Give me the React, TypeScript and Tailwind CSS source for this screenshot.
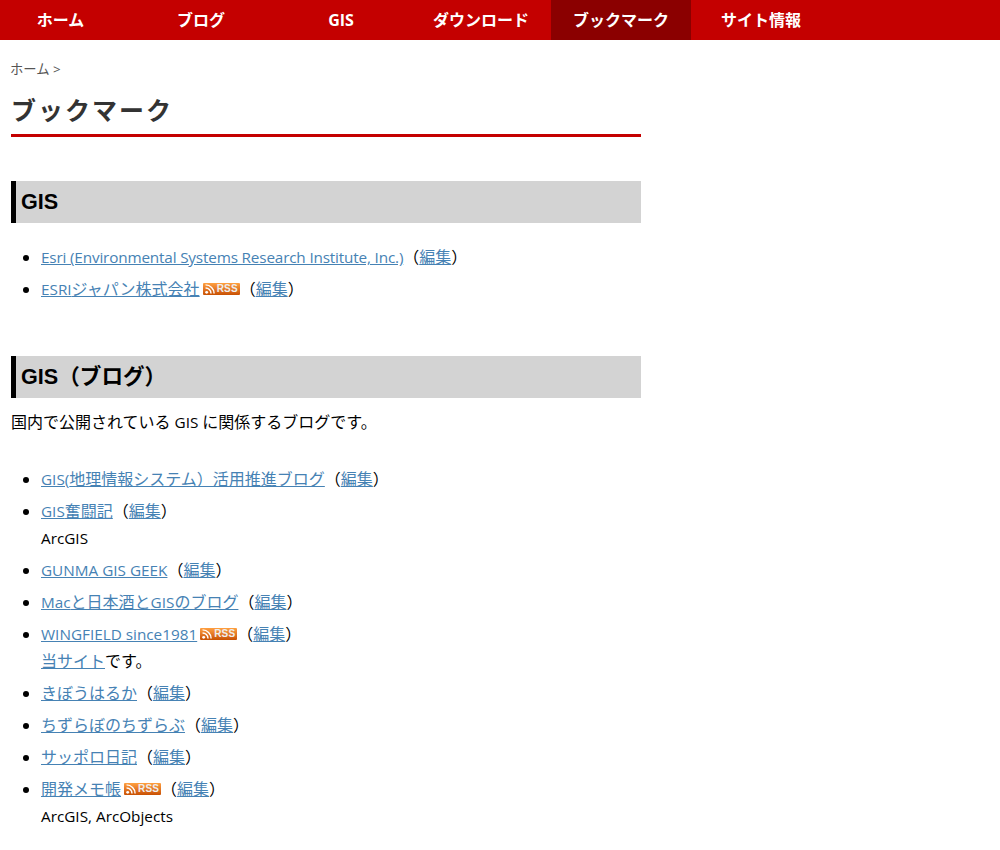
import React from "react";

const bodyFont = { fontFamily: '"Open Sans", "Noto Sans CJK JP", sans-serif' };

const navItems = [
  { label: "ホーム", className: "w-[131px] pr-[10px]" },
  { label: "ブログ", className: "w-[140px]" },
  { label: "GIS", className: "w-[140px]" },
  { label: "ダウンロード", className: "w-[140px]" },
  { label: "ブックマーク", className: "w-[140px] bg-[#8b0000]" },
  { label: "サイト情報", className: "w-[140px]" },
];

// latin runs are a touch smaller than the japanese next to them
const Mixed = ({ text }: { text: string }) => (
  <>
    {text.split(/([\x20-\x7e]+)/).map((part, i) =>
      i % 2 ? (
        <span key={i} className="text-[15.3px]">
          {part}
        </span>
      ) : (
        part
      ),
    )}
  </>
);

const RssBadge = () => (
  <span className="relative top-[-2px] ml-[3px] inline-flex h-[12px] w-[37px] items-center gap-[2px] rounded-[1px] bg-gradient-to-b from-[#ffa040] to-[#c85000] px-[2px] align-middle">
    <svg width="10" height="10" viewBox="0 0 9 9" className="shrink-0">
      <circle cx="1.5" cy="7.5" r="1.3" fill="#fff" />
      <path d="M0.5 3.6a4.9 4.9 0 0 1 4.9 4.9" fill="none" stroke="#fff" strokeWidth="1.3" />
      <path d="M0.5 0.8a7.7 7.7 0 0 1 7.7 7.7" fill="none" stroke="#fff" strokeWidth="1.3" />
    </svg>
    <span className="text-[10px] leading-none font-bold tracking-[0.2px] text-[#eee]" style={{ fontFamily: '"Liberation Sans", sans-serif' }}>
      RSS
    </span>
  </span>
);

const Link = ({ children }: { children: React.ReactNode }) => (
  <a href="#" className="text-[#4682b4] underline">
    {children}
  </a>
);

const Bookmark = ({ title, rss, note, tight }: { title: string; rss?: boolean; note?: React.ReactNode; tight?: boolean }) => (
  <li className="mb-[4px] leading-[28px]">
    <span className={tight ? "tracking-[-0.17px]" : ""}>
      <Link>
        <Mixed text={title} />
      </Link>
    </span>
    {rss && <RssBadge />}
    <span>
      （<Link>編集</Link>）
    </span>
    {note && <div className="pb-[1px] leading-[26px]">{note}</div>}
  </li>
);

const SectionTitle = ({ children }: { children: React.ReactNode }) => (
  <h2
    className="h-[42px] border-l-[5px] border-black bg-[#d3d3d3] pl-[5px] text-[21.6px] leading-[41px] font-bold text-black"
    style={{ fontFamily: '"Liberation Sans", "Noto Sans CJK JP", sans-serif' }}
  >
    {children}
  </h2>
);

export default function App() {
  return (
    <div className="min-h-[850px] bg-white text-[16px] text-black" style={bodyFont}>
      <nav className="flex h-[40px] bg-[#c40000]">
        {navItems.map((item) => (
          <a key={item.label} href="#" className={`${item.className} text-center text-[16px] leading-[40px] font-bold text-white`}>
            {item.label}
          </a>
        ))}
      </nav>

      <main className="ml-[11px] w-[630px]">
        <div className="pt-[19px] -ml-[1px] text-[13.33px] leading-[21px] text-[#555]">ホーム &gt;</div>
        <h1
          className="mt-[9px] border-b-[3px] border-[#c40000] pt-[2px] pb-[2px] text-[25px] leading-[41px] font-bold tracking-[2px] text-[#333]"
          style={{ fontFamily: '"Liberation Sans", "Noto Sans CJK JP", sans-serif' }}
        >
          ブックマーク
        </h1>

        <section className="mt-[44px]">
          <SectionTitle>GIS</SectionTitle>
          <ul className="mt-[20px] list-disc pl-[30px]">
            <Bookmark title="Esri (Environmental Systems Research Institute, Inc.)" tight />
            <Bookmark title="ESRIジャパン株式会社" rss />
          </ul>
        </section>

        <section className="mt-[53px]">
          <SectionTitle>GIS（ブログ）</SectionTitle>
          <p className="mt-[10px] leading-[28px]">
            <Mixed text="国内で公開されている GIS に関係するブログです。" />
          </p>
          <ul className="mt-[29px] list-disc pl-[30px]">
            <Bookmark title="GIS(地理情報システム）活用推進ブログ" />
            <Bookmark title="GIS奮闘記" note={<Mixed text="ArcGIS" />} />
            <Bookmark title="GUNMA GIS GEEK" />
            <Bookmark title="Macと日本酒とGISのブログ" />
            <Bookmark title="WINGFIELD since1981" rss note={<><Link>当サイト</Link>です。</>} />
            <Bookmark title="きぼうはるか" />
            <Bookmark title="ちずらぼのちずらぶ" />
            <Bookmark title="サッポロ日記" />
            <Bookmark title="開発メモ帳" rss note={<Mixed text="ArcGIS, ArcObjects" />} />
          </ul>
        </section>
      </main>
    </div>
  );
}
